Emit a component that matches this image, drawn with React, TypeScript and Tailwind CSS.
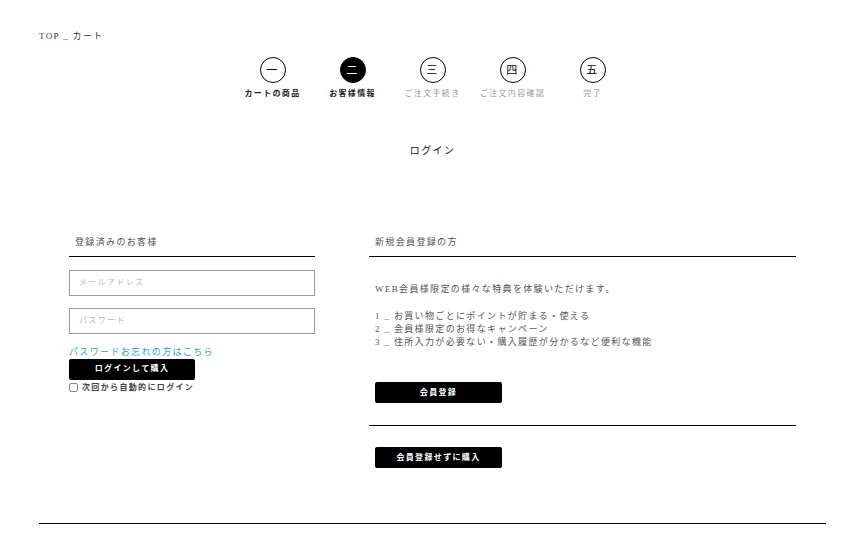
const steps = [
  { n: '一', label: 'カートの商品', state: 'done' },
  { n: '二', label: 'お客様情報', state: 'current' },
  { n: '三', label: 'ご注文手続き', state: 'todo' },
  { n: '四', label: 'ご注文内容確認', state: 'todo' },
  { n: '五', label: '完了', state: 'todo' },
]

export default function App() {
  return (
    <div
      className="min-h-[535px] bg-white px-[39px] text-[9px] tracking-[0.15em] text-[#333]"
      style={{ fontFamily: '"Liberation Serif", "Noto Sans CJK JP", serif' }}
    >
      <div className="pt-[31px] text-[9px] leading-[10px]">
        <span className="text-[#1b3a6b]">TOP</span> _ カート
      </div>

      <div className="mt-[16px] flex justify-center gap-0">
        {steps.map((s) => (
          <div key={s.n} className="flex w-[80px] flex-col items-center">
            <div
              className={
                s.state === 'current'
                  ? 'flex h-[26px] w-[26px] items-center justify-center rounded-full border-[1.5px] border-black bg-black text-[11px] text-white'
                  : 'flex h-[26px] w-[26px] items-center justify-center rounded-full border-[1.5px] border-black text-[11px] text-black'
              }
            >
              {s.n}
            </div>
            <div
              className={
                s.state === 'todo'
                  ? 'mt-[5px] whitespace-nowrap text-[8px] text-[#999]'
                  : 'mt-[5px] whitespace-nowrap text-[8px] font-bold text-[#222]'
              }
            >
              {s.label}
            </div>
          </div>
        ))}
      </div>

      <h1 className="mt-[44px] text-center text-[10px] leading-[14px] text-[#222]">ログイン</h1>

      <div className="mt-[78px] flex gap-[54px] px-[30px]">
        <div className="w-[246px]">
          <div className="border-b-[1.5px] border-black pb-[6px] pl-[6px] text-[9px] text-[#555]">登録済みのお客様</div>
          <div className="mt-[13px] flex h-[26px] items-center border border-[#999] px-[9px] text-[8px] text-[#bbb]">メールアドレス</div>
          <div className="mt-[12px] flex h-[26px] items-center border border-[#999] px-[9px] text-[8px] text-[#bbb]">パスワード</div>
          <div className="mt-[13px] text-[9px] leading-[11px] text-[#2aa3d6]">パスワードお忘れの方はこちら</div>
          <button className="mt-[1px] flex h-[21px] w-[126px] items-center justify-center rounded-[2px] bg-black text-[8px] font-bold text-white">
            ログインして購入
          </button>
          <label className="mt-[2px] flex items-center gap-[4px] text-[8px] font-bold text-[#444]">
            <span className="h-[9px] w-[9px] rounded-[2px] border border-[#888]" />
            次回から自動的にログイン
          </label>
        </div>

        <div className="flex-1">
          <div className="border-b-[1.5px] border-black pb-[6px] pl-[6px] text-[9px] text-[#555]">新規会員登録の方</div>
          <div className="px-[6px]">
            <p className="mt-[26px] text-[9px] text-[#555]">WEB会員様限定の様々な特典を体験いただけます。</p>
            <ul className="mt-[14px] text-[9px] leading-[13px] text-[#555]">
              <li>1 _ お買い物ごとにポイントが貯まる・使える</li>
              <li>2 _ 会員様限定のお得なキャンペーン</li>
              <li>3 _ 住所入力が必要ない・購入履歴が分かるなど便利な機能</li>
            </ul>
            <button className="mt-[33px] flex h-[21px] w-[127px] items-center justify-center rounded-[2px] bg-black text-[8px] font-bold text-white">
              会員登録
            </button>
          </div>
          <div className="mt-[22px] border-t border-black" />
          <div className="px-[6px]">
            <button className="mt-[21px] flex h-[21px] w-[127px] items-center justify-center rounded-[2px] bg-black text-[8px] font-bold text-white">
              会員登録せずに購入
            </button>
          </div>
        </div>
      </div>

      <div className="mt-[55px] border-t border-black" />
    </div>
  )
}
